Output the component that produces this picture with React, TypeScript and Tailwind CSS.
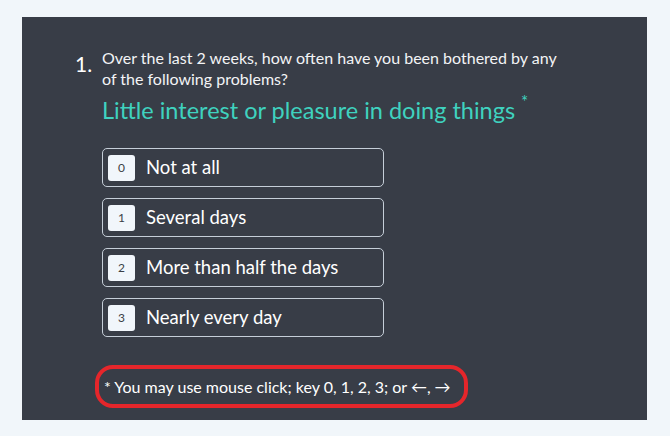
const options = [
  { key: "0", label: "Not at all" },
  { key: "1", label: "Several days" },
  { key: "2", label: "More than half the days" },
  { key: "3", label: "Nearly every day" },
];

export default function App() {
  return (
    <div className="w-[670px] h-[436px] bg-[#f1f6fa] pt-[17px] pl-[22px] font-['Lato',sans-serif]">
      <div className="w-[625px] h-[403px] bg-[#383d47] pt-[30px] pl-[53px]">
        <div className="flex">
          <span className="w-[27px] pt-[5px] text-[21px] leading-[24px] text-white">1.</span>
          <div className="flex flex-col">
            <p className="w-[462px] text-[16px] leading-[21px] text-[#f3f4f6]">
              Over the last 2 weeks, how often have you been bothered by any of the following problems?
            </p>
            <h2 className="mt-[6px] text-[23.5px] leading-[30px] text-[#3fd2bf]">
              Little interest or pleasure in doing things
              <span className="ml-[6px] text-[17px] relative -top-[11px]">*</span>
            </h2>
            <div className="mt-[20px] flex flex-col gap-[11px]">
              {options.map((o) => (
                <div
                  key={o.key}
                  className="w-[282px] h-[39px] flex items-center border border-[#c5ced8] rounded-[5px] pl-[5px]"
                >
                  <span className="w-[27px] h-[26px] flex items-center justify-center rounded-[3px] bg-[#f1f6fb] text-[12px] text-[#3b3f46]">
                    {o.key}
                  </span>
                  <span className="ml-[11px] text-[18.5px] text-white">{o.label}</span>
                </div>
              ))}
            </div>
            <div className="mt-[28px] -ml-[7px] w-[373px] h-[43px] flex items-center pl-[5px] border-[4px] border-[#e5262b] rounded-[18px]">
              <span className="text-[16px] text-white">* You may use mouse click; key 0, 1, 2, 3; or ←, →</span>
            </div>
          </div>
        </div>
      </div>
    </div>
  );
}
